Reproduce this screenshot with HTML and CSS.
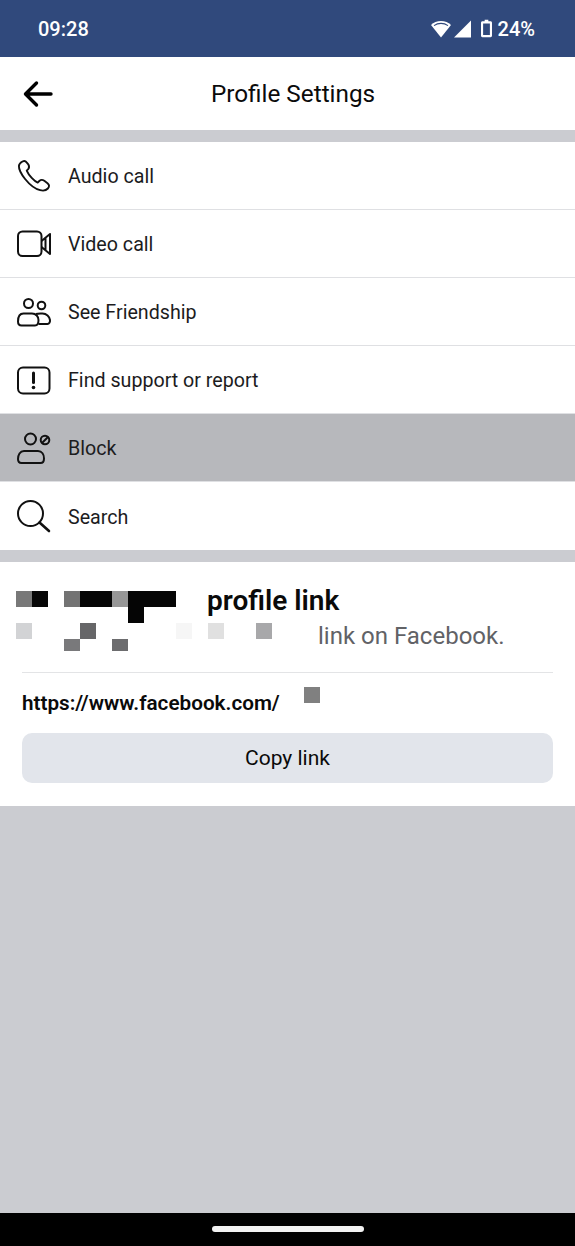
FILE: index.html
```html
<!DOCTYPE html>
<html lang="en">
<head>
<meta charset="utf-8">
<title>Profile Settings</title>
<link rel="stylesheet" href="styles.css">
</head>
<body>
<div class="screen">
  <div class="status">
    <span class="time">09:28</span>
    <div class="status-right">
      <svg class="ic-wifi" width="20" height="18" viewBox="0 0 20 18"><path d="M0 5C2.600 2.500 6.100 1 10 1s7.400 1.500 10 4L10 17.500z" fill="#fff"/><path d="M3 5.600C5 4.200 7.400 3.400 10 3.400s5 .8 7 2.200" fill="none" stroke="#30497c" stroke-width="1.100"/></svg>
      <svg class="ic-signal" width="17" height="18" viewBox="0 0 17 18"><path d="M17 0.500V17.500H0z" fill="#fff"/></svg>
      <svg class="ic-batt" width="11" height="19" viewBox="0 0 12 19"><path fill-rule="evenodd" d="M4 0h4v1.600h2.400c.9 0 1.600.7 1.600 1.600v14.200c0 .9-.7 1.600-1.600 1.600H1.600C.7 19 0 18.300 0 17.400V3.200c0-.9.7-1.600 1.600-1.600H4zM2.300 4v12.700h7.400V4z" fill="#fff"/></svg>
      <span class="pct">24%</span>
    </div>
  </div>

  <header class="topbar">
    <svg class="back" width="32" height="28" viewBox="0 0 32 28"><path d="M29 14H4M14.500 3L3.500 14l11 11" fill="none" stroke="#000" stroke-width="3.400" stroke-linecap="round" stroke-linejoin="round"/></svg>
    <h1 class="title">Profile Settings</h1>
  </header>

  <ul class="menu">
    <li class="row">
      <svg class="icon" width="36" height="36" viewBox="0 0 36 36"><path d="M6.500 3.500c-1.500.8-3.500 2.300-3.600 4.500-.1 3 2 7.700 6.200 13 4.500 5.600 10.300 10 15 11.200 3 .8 6 .3 7.800-1.700 1.700-1.900 1.500-3.800-.4-5.300l-3.200-2.400c-1.800-1.300-3.500-1.200-5 .2l-1.600 1.600c-3.500-1.500-8.800-7-11-12l1.300-1.300c1.300-1.400 1.400-2.900.5-4.600L10.600 4.400C9.500 2.800 8 2.700 6.500 3.500z" fill="none" stroke="#111" stroke-width="1.900" stroke-linejoin="round"/></svg>
      <span class="label">Audio call</span>
    </li>
    <li class="row">
      <svg class="icon" width="36" height="36" viewBox="0 0 36 36"><rect x="2" y="5.500" width="23.500" height="24.500" rx="4.500" fill="none" stroke="#111" stroke-width="2"/><path d="M25.500 15l8.500-7v20l-8.500-7M29.500 12v12" fill="none" stroke="#111" stroke-width="2" stroke-linejoin="round"/></svg>
      <span class="label">Video call</span>
    </li>
    <li class="row">
      <svg class="icon" width="36" height="36" viewBox="0 0 36 36"><circle cx="12.500" cy="9.500" r="4.500" fill="none" stroke="#111" stroke-width="2"/><circle cx="25.500" cy="11.500" r="3.800" fill="none" stroke="#111" stroke-width="2"/><path d="M7.500 19.500h8.500c4 0 6.500 3 6.500 6.500 0 3-1 5.500-3.500 5.500H5.500C3 31.500 2 29.500 2 27.500c0-5 2-8 5.500-8z" fill="none" stroke="#111" stroke-width="2"/><path d="M20 20c1.500-.5 3-.5 4.500-.5h2c4 0 7 3 7.500 6.500.2 2-.8 4-2.500 4H22.500" fill="none" stroke="#111" stroke-width="2"/></svg>
      <span class="label">See Friendship</span>
    </li>
    <li class="row">
      <svg class="icon" width="36" height="36" viewBox="0 0 36 36"><rect x="2" y="5.500" width="31.500" height="26" rx="5" fill="none" stroke="#111" stroke-width="2"/><path d="M17.500 11v9.500" stroke="#111" stroke-width="3" stroke-linecap="round"/><circle cx="17.500" cy="25.500" r="1.800" fill="#111"/></svg>
      <span class="label">Find support or report</span>
    </li>
    <li class="row row-active">
      <svg class="icon" width="36" height="36" viewBox="0 0 36 36"><circle cx="14.500" cy="9" r="5.500" fill="none" stroke="#111" stroke-width="2"/><path d="M8 21h14c4 0 6 3.500 6 7.500 0 3-1.500 4.500-3.500 4.500H5.500C3 33 2 31.500 2 29c0-4 2-8 6-8z" fill="none" stroke="#111" stroke-width="2"/><circle cx="29" cy="10" r="4.300" fill="none" stroke="#111" stroke-width="2"/><path d="M26 13l6-6" stroke="#111" stroke-width="2"/></svg>
      <span class="label">Block</span>
    </li>
    <li class="row row-last">
      <svg class="icon" width="36" height="36" viewBox="0 0 36 36"><circle cx="14.500" cy="15.500" r="12.500" fill="none" stroke="#111" stroke-width="2"/><path d="M23.500 24.500l9.500 8.500" stroke="#111" stroke-width="2.600" stroke-linecap="round"/></svg>
      <span class="label">Search</span>
    </li>
  </ul>

  <section class="panel">
    <svg class="mosaic" width="320" height="116" viewBox="0 0 320 116" aria-hidden="true">
      <rect x="16" y="0" width="16" height="16" fill="#787878"/>
      <rect x="32" y="0" width="16" height="16" fill="#060606"/>
      <rect x="64" y="0" width="16" height="16" fill="#737373"/>
      <rect x="80" y="0" width="32" height="16" fill="#050505"/>
      <rect x="112" y="0" width="16" height="16" fill="#969696"/>
      <rect x="128" y="0" width="48" height="16" fill="#050505"/>
      <rect x="128" y="16" width="16" height="16" fill="#050505"/>
      <rect x="16" y="32" width="16" height="16" fill="#d2d3d5"/>
      <rect x="80" y="32" width="16" height="16" fill="#666668"/>
      <rect x="176" y="32" width="16" height="16" fill="#f6f6f6"/>
      <rect x="208" y="32" width="16" height="16" fill="#e0e0e0"/>
      <rect x="256" y="32" width="16" height="16" fill="#a8a8aa"/>
      <rect x="64" y="48" width="16" height="12" fill="#79797b"/>
      <rect x="112" y="48" width="16" height="12" fill="#6c6c6e"/>
      <rect x="304" y="96" width="16" height="16" fill="#808080"/>
    </svg>
    <h2 class="panel-title">profile link</h2>
    <p class="panel-desc">link on Facebook.</p>
    <div class="url-row">https://www.facebook.com/</div>
    <button class="copy" type="button">Copy link</button>
  </section>

  <div class="fill"></div>
  <div class="navbar"><span class="home"></span></div>
</div>
</body>
</html>
```

FILE: styles.css
```css
* { box-sizing: border-box; }
html, body { margin: 0; padding: 0; }
body { font-family: Roboto, "Liberation Sans", sans-serif; background: #cbccd1; color: #111; }
.screen { width: 575px; height: 1246px; display: flex; flex-direction: column; overflow: hidden; }

.status { height: 57px; flex: none; background: #30497c; color: #fff; display: flex; align-items: center; justify-content: space-between; padding: 0 40px 0 38px; font-size: 20px; font-weight: 500; }
.status-right { display: flex; align-items: center; }
.ic-wifi { margin-left: -3px; }
.ic-signal { margin-left: 3px; }
.ic-batt { margin-left: 10px; }
.pct { margin-left: 6px; }

.topbar { height: 73px; flex: none; background: #fff; display: flex; align-items: center; justify-content: center; position: relative; }
.back { position: absolute; left: 22px; top: 23px; }
.title { margin: 0 0 0 11px; font-size: 24.300px; font-weight: 450; color: #0b0b0b; }

.menu { list-style: none; margin: 12px 0 0; padding: 0; background: #fff; flex: none; }
.row { height: 68px; display: flex; align-items: center; padding-left: 16px; border-bottom: 1px solid #dfe0e3; background: #fff; }
.row-active { background: #b7b8bc; border-bottom-color: #dfe0e3; }
.row-last { border-bottom: 0; }
.icon { flex: none; }
.label { margin-left: 16px; padding-top: 2px; font-size: 19.650px; color: #1c1c1e; }

.panel { position: relative; margin-top: 12px; height: 244px; flex: none; background: #fff; padding: 22px 22px 0; display: flex; flex-direction: column; }
.mosaic { position: absolute; left: 0; top: 29px; }
.panel-title { margin: 0 0 0 185px; font-size: 28px; line-height: 34px; font-weight: 650; color: #0a0a0a; }
.panel-desc { margin: 3px 0 0 296px; font-size: 24px; line-height: 30px; color: #616266; }
.url-row { margin-top: 21px; border-top: 1px solid #e3e4e6; padding-top: 17px; font-size: 20.700px; line-height: 26px; font-weight: 600; color: #0a0a0a; }
.copy { margin-top: 17px; height: 50px; width: 100%; border: 0; border-radius: 10px; background: #e2e5eb; font-family: inherit; font-size: 21px; font-weight: 450; color: #0a0a0a; padding: 0; }

.fill { flex: 1; background: #cbccd1; }
.navbar { height: 33px; flex: none; background: #000; display: flex; justify-content: center; padding-top: 13px; }
.home { width: 152px; height: 6px; border-radius: 3px; background: #f2f2f2; }
```
